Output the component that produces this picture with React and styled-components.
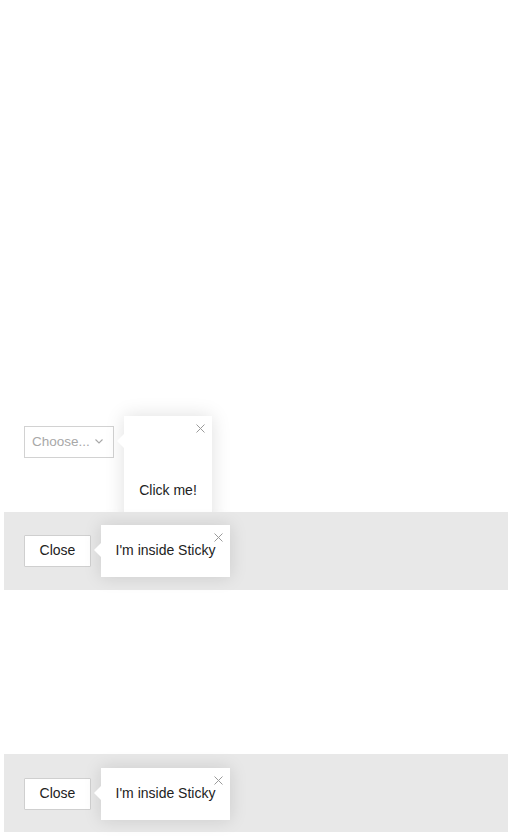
import React from "react";
import styled, { createGlobalStyle } from "styled-components";

const GlobalStyle = createGlobalStyle`
  html, body {
    margin: 0;
    padding: 0;
    background: #fff;
    overflow: hidden;
  }
  body {
    font-family: "Liberation Sans", Arial, sans-serif;
    color: #222;
  }
`;

const Page = styled.div`
  padding: 426px 0 0 4px;
  height: 837px;
  box-sizing: border-box;
`;

const Row = styled.div`
  padding-left: 20px;
  display: flex;
`;

const Anchor = styled.div`
  position: relative;
  display: inline-flex;
`;

const Select = styled.div`
  width: 90px;
  height: 32px;
  box-sizing: border-box;
  border: 1px solid #d2d2d2;
  background: #fff;
  display: flex;
  align-items: center;
  padding: 0 8px 1px 7px;
  gap: 5px;
  font-size: 13.5px;
  color: #a8a8a8;
`;

const Button = styled.button`
  width: 67px;
  height: 32px;
  border: 1px solid #cfcfcf;
  border-radius: 1px;
  background: #fff;
  font-family: inherit;
  font-size: 14px;
  color: #222;
  padding: 0 0 3px;
  cursor: pointer;
`;

const Sticky = styled.div`
  position: relative;
  z-index: 2;
  background: #e8e8e8;
  height: 78px;
  box-sizing: border-box;
  padding: ${(p) => p.$pad}px 20px 0;
  margin-top: ${(p) => p.$top}px;
`;

const Tip = styled.div`
  position: absolute;
  left: calc(100% + 10px);
  top: ${(p) => p.$top}px;
  width: ${(p) => p.$w}px;
  height: ${(p) => p.$h}px;
  background: #fff;
  box-shadow: 0 0 18px rgba(0, 0, 0, 0.13);
  box-sizing: border-box;
  display: flex;
  justify-content: center;
  align-items: ${(p) => (p.$bottom ? "flex-end" : "center")};
  padding-bottom: ${(p) => (p.$bottom ? 14 : 3)}px;
  font-size: 14px;
  white-space: nowrap;
  color: #222;
  z-index: 1;

  &::before {
    content: "";
    position: absolute;
    left: -7px;
    top: ${(p) => p.$arrow}px;
    border-top: 7px solid transparent;
    border-bottom: 7px solid transparent;
    border-right: 7px solid #fff;
  }
`;

const TipText = styled.span`
  margin-bottom: ${(p) => p.$mb || 0}px;
`;

const CloseX = styled.span`
  position: absolute;
  top: 8px;
  right: 7px;
  width: 9px;
  height: 9px;
  display: flex;
`;

const X = () => (
  <CloseX>
    <svg width="9" height="9" viewBox="0 0 9 9">
      <path d="M0.5 0.5L8.5 8.5M8.5 0.5L0.5 8.5" stroke="#9a9a9a" strokeWidth="1" />
    </svg>
  </CloseX>
);

const Chevron = () => (
  <svg width="8" height="5" viewBox="0 0 8 5">
    <path d="M0.5 0.5L4 4L7.5 0.5" stroke="#a8a8a8" strokeWidth="1.1" fill="none" />
  </svg>
);

const StickyTip = () => (
  <Tip $top={-10} $w={129} $h={52} $arrow={18}>
    <X />
    <TipText>I'm inside Sticky</TipText>
  </Tip>
);

export default function App() {
  return (
    <>
      <GlobalStyle />
      <Page>
        <Row>
          <Anchor>
            <Select>
              Choose...
              <Chevron />
            </Select>
            <Tip $top={-10} $w={88} $h={110} $arrow={18} $bottom>
              <X />
              <TipText $mb={14}>Click me!</TipText>
            </Tip>
          </Anchor>
        </Row>
        <Sticky $top={54} $pad={23}>
          <Anchor>
            <Button>Close</Button>
            <StickyTip />
          </Anchor>
        </Sticky>
        <Sticky $top={164} $pad={24}>
          <Anchor>
            <Button>Close</Button>
            <StickyTip />
          </Anchor>
        </Sticky>
      </Page>
    </>
  );
}
